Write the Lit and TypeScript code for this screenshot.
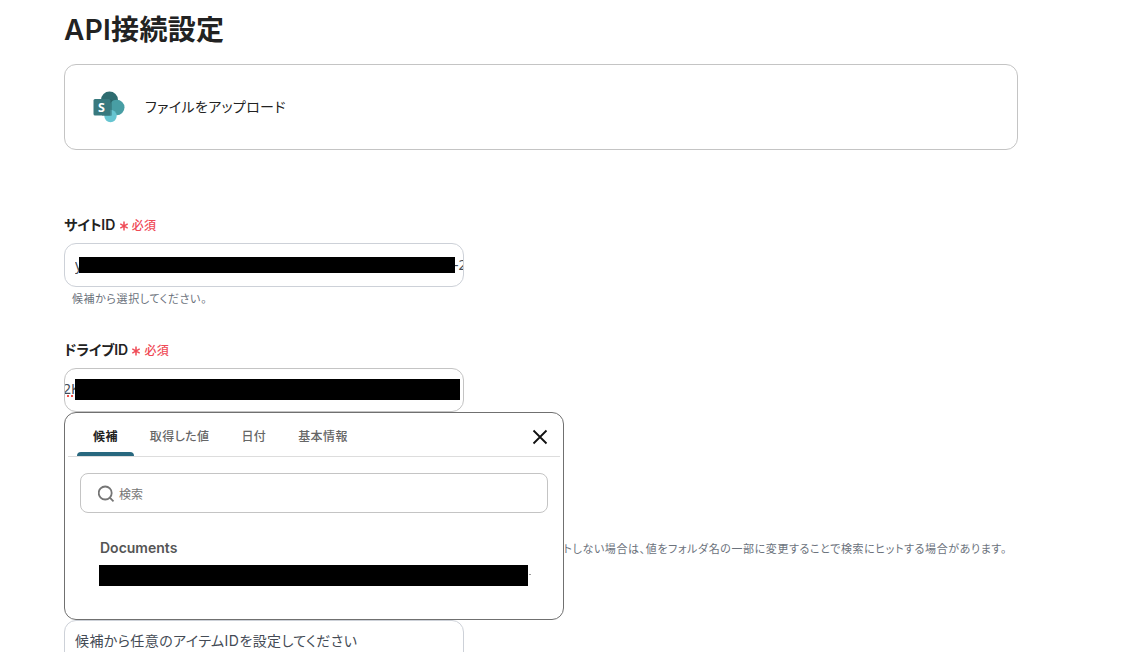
import { LitElement, html, css } from 'lit';
import { customElement, property } from 'lit/decorators.js';

@customElement('field-label')
export class FieldLabel extends LitElement {
    @property() text = '';

    static styles = css`
    :host {
        display: flex;
        align-items: center;
        height: 18px;
        padding-bottom: 2px;
        white-space: nowrap;
    }
    .name {
        font-size: 14px;
        font-weight: 600;
        letter-spacing: -0.1px;
        color: #222;
    }
    .mark {
        width: 8px;
        height: 10px;
        margin: 4px 4px 0 4.5px;
        stroke: #ef4a56;
        stroke-width: 1.5;
    }
    .required {
        font-size: 12px;
        font-weight: 500;
        letter-spacing: 0.3px;
        color: #ef4a56;
    }
    `;

    render() {
        return html`
        <span class="name">${this.text}</span>
        <svg class="mark" viewBox="0 0 8 10">
            <path d="M4 .5v9M.3 2.8l7.4 4.4M7.7 2.8L.3 7.2" />
        </svg>
        <span class="required">必須</span>
        `;
    }
}

@customElement('suggest-popover')
export class SuggestPopover extends LitElement {
    tabs = ['候補', '取得した値', '日付', '基本情報'];

    static styles = css`
    :host {
        display: block;
        box-sizing: border-box;
        width: 500px;
        height: 208px;
        border: 1px solid #707070;
        border-radius: 12px;
        background: #fff;
    }
    .tabs {
        display: flex;
        height: 43px;
        margin: 0 3px;
        padding-left: 9px;
        border-bottom: 1px solid #ddd;
    }
    .tab {
        display: flex;
        align-items: center;
        padding: 5px 16px 0;
        border-bottom: 4px solid transparent;
        box-sizing: border-box;
        height: 43px;
        font-size: 12px;
        font-weight: 500;
        letter-spacing: 0.4px;
        color: #666;
    }
    .tab.active {
        position: relative;
        border: 0;
        padding-bottom: 4px;
        font-weight: 600;
        color: #222;
    }
    .tab.active::after {
        content: '';
        position: absolute;
        inset: auto 0 0 0;
        height: 4px;
        border-radius: 4px 4px 0 0;
        background: #28687f;
    }
    .close {
        width: 16px;
        height: 16px;
        margin: 16px 12px 0 auto;
        stroke: #111;
        stroke-width: 1.8;
    }
    .search {
        display: flex;
        align-items: center;
        box-sizing: border-box;
        height: 40px;
        margin: 16px 15px 0;
        padding: 1px 0 0 17px;
        border: 1px solid #c4c4c4;
        border-radius: 8px;
        font-size: 12px;
        color: #757575;
    }
    .search svg {
        width: 18px;
        height: 18px;
        margin: 1px 3px 0 0;
        fill: none;
        stroke: #757575;
        stroke-width: 1.8;
    }
    .item {
        padding: 25px 0 0 34px;
    }
    .item-name {
        padding-left: 1px;
        font-size: 14px;
        font-weight: 600;
        line-height: 20px;
        color: #555;
    }
    .item-value {
        display: flex;
        align-items: center;
        height: 21px;
        margin-top: 7px;
    }
    .mask {
        width: 429px;
        height: 21px;
        margin-right: 1px;
        background: #000;
    }
    .dash {
        width: 2px;
        height: 1px;
        margin-bottom: 3px;
        background: #999;
    }
    `;

    render() {
        return html`
        <div class="tabs">
            ${this.tabs.map((tab, i) => html`<div class="tab ${i === 0 ? 'active' : ''}">${tab}</div>`)}
            <svg class="close" viewBox="0 0 16 16"><path d="M1.5 1.5l13 13M14.5 1.5l-13 13" /></svg>
        </div>
        <div class="search">
            <svg viewBox="0 0 18 18"><circle cx="7.2" cy="8" r="6.500" /><path d="M11.8 12.7l3.700 3.700" /></svg>
            <span>検索</span>
        </div>
        <div class="item">
            <div class="item-name">Documents</div>
            <div class="item-value"><span class="mask"></span><span class="dash"></span></div>
        </div>
        `;
    }
}

@customElement('app-root')
export class AppRoot extends LitElement {
    static styles = css`
    :host {
        display: block;
        box-sizing: border-box;
        height: 652px;
        overflow: hidden;
        padding-left: 64px;
        background: #fff;
        color: #222;
        font-family: Inter, 'Noto Sans CJK JP', sans-serif;
        font-feature-settings: 'palt';
    }
    h1 {
        margin: 0;
        height: 64px;
        font-size: 28px;
        font-weight: 600;
        line-height: 61px;
        letter-spacing: 0.3px;
    }
    .card {
        display: flex;
        align-items: center;
        box-sizing: border-box;
        width: 954px;
        height: 86px;
        padding-left: 28px;
        margin-bottom: 65px;
        border: 1px solid #c4c4c4;
        border-radius: 12px;
        font-size: 14px;
    }
    .card-text {
        padding-bottom: 2px;
        letter-spacing: 0.35px;
    }
    .logo {
        width: 32px;
        height: 32px;
        margin-right: 20px;
    }
    .logo text {
        font: 700 12.5px 'Open Sans', sans-serif;
    }
    .field {
        position: relative;
        height: 125px;
    }
    .input {
        display: flex;
        align-items: center;
        box-sizing: border-box;
        width: 400px;
        height: 44px;
        margin-top: 8px;
        padding-left: 10px;
        overflow: hidden;
        border: 1px solid #cdd1d8;
        border-radius: 12px;
        font-size: 14px;
        white-space: nowrap;
        color: #444b55;
    }
    .input.focused {
        padding: 0 0 2px;
        border-color: #c4c4c4;
    }
    .mask {
        flex: none;
        background: #000;
    }
    .site-mask {
        width: 376px;
        height: 16px;
    }
    .drive-mask {
        width: 385px;
        height: 21px;
    }
    .lead,
    .tail {
        flex: none;
        overflow: hidden;
        padding-bottom: 2px;
        font-family: 'Noto Sans', sans-serif;
    }
    .lead {
        width: 4px;
    }
    .tail {
        width: 8px;
        text-indent: -1px;
    }
    .misspelt {
        width: 10px;
        text-indent: -2px;
        text-decoration: underline dotted #f0504a 2px;
        text-underline-offset: 2px;
    }
    .help {
        padding: 3px 0 0 8px;
        font-size: 11px;
        line-height: 19px;
        letter-spacing: 0.6px;
        color: #6b727c;
    }
    .item-help {
        width: 935px;
        padding-top: 128px;
        text-align: right;
        white-space: nowrap;
    }
    .drive {
        height: auto;
    }
    .popover {
        position: absolute;
        top: 72px;
        left: 0;
    }
    .item-field .input {
        margin-top: 61px;
        padding-bottom: 5px;
        letter-spacing: 0.42px;
    }
    `;

    render() {
        return html`
        <h1>API接続設定</h1>
        <div class="card">
            <svg class="logo" viewBox="0 0 32 32">
                <circle cx="16.5" cy="9" r="8.5" fill="#2e6c70" />
                <circle cx="23.7" cy="16.5" r="7.8" fill="#489ea4" />
                <circle cx="17.5" cy="25" r="6.2" fill="#67c5d1" />
                <path d="M9 8h8.500a1.500 1.500 0 0 1 1.500 1.500v14a1.500 1.500 0 0 1-1.500 1.500H9z" fill="#25595c" opacity=".4" />
                <rect x=".5" y="8" width="17" height="16.500" rx="1.500" fill="#38797e" />
                <text x="8.500" y="20.600" text-anchor="middle" fill="#fff">S</text>
            </svg>
            <span class="card-text">ファイルをアップロード</span>
        </div>
        <div class="field">
            <field-label text="サイトID"></field-label>
            <div class="input">
                <span class="lead">y</span><span class="mask site-mask"></span><span class="tail">-2</span>
            </div>
            <div class="help">候補から選択してください。</div>
        </div>
        <div class="field drive">
            <field-label text="ドライブID"></field-label>
            <div class="input focused">
                <span class="lead misspelt">2K</span><span class="mask drive-mask"></span>
            </div>
            <suggest-popover class="popover"></suggest-popover>
        </div>
        <div class="item-field">
            <div class="help item-help">トしない場合は、値をフォルダ名の一部に変更することで検索にヒットする場合があります。</div>
            <div class="input">候補から任意のアイテムIDを設定してください</div>
        </div>
        `;
    }
}
